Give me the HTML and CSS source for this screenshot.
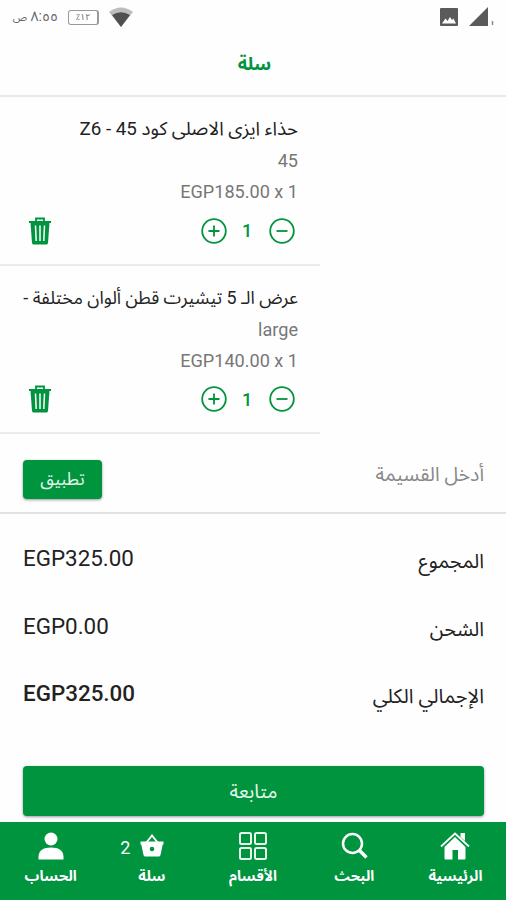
FILE: index.html
```html
<!DOCTYPE html>
<html lang="ar" dir="rtl">
<head>
  <meta charset="utf-8">
  <meta name="viewport" content="width=device-width, initial-scale=1">
  <title>سلة</title>
  <link rel="stylesheet" href="styles.css">
</head>
<body>

  <!-- Shared icons -->
  <svg class="icon-defs" width="0" height="0">
    <symbol id="trash" viewBox="0 0 24 28">
      <path d="M8 4.500V1.500h8v3" fill="none" stroke="currentColor" stroke-width="1.800"/>
      <path d="M1 4h22v2H1z" fill="currentColor"/>
      <path d="M2.500 5.500h19L20 26q-.2 1.500-1.700 1.500H5.700Q4.200 27.500 4 26z" fill="currentColor"/>
      <path d="M7.500 8.500l.7 15.500M12 8.500v15.500M16.500 8.500l-.7 15.500" fill="none" stroke="#fff" stroke-width="1.500"/>
    </symbol>
    <symbol id="plus" viewBox="0 0 26 26">
      <circle cx="13" cy="13" r="11.800" fill="none" stroke="currentColor" stroke-width="1.800"/>
      <path d="M7.500 13h11M13 7.500v11" stroke="currentColor" stroke-width="1.800"/>
    </symbol>
    <symbol id="minus" viewBox="0 0 26 26">
      <circle cx="13" cy="13" r="11.800" fill="none" stroke="currentColor" stroke-width="1.800"/>
      <path d="M7.500 13h11" stroke="currentColor" stroke-width="1.800"/>
    </symbol>
  </svg>

  <div class="status-bar">
    <div class="status-group right">
      <svg width="20" height="20" viewBox="0 0 20 20">
        <rect x="1" y="1" width="18" height="18" rx="1" fill="#5a5a5a"/>
        <path d="M3 16.500l3.500-5 2 2.500 2.500-4 2 3 1.500-1.500 2.500 5z" fill="#fff"/>
      </svg>
      <svg width="26" height="20" viewBox="0 0 26 20">
        <path d="M0 19L19 0v19z" fill="#5a5a5a"/>
        <path d="M23.500 14v4" stroke="#888" stroke-width="1.500"/>
      </svg>
    </div>
    <div class="status-group left">
      <span class="clock" dir="rtl">٨:٥٥ <small>ص</small></span>
      <span class="battery">٪١٢</span>
      <svg class="wifi" width="24" height="20" viewBox="0 0 24 20">
        <path d="M0 5Q12-4 24 5L12 20z" fill="#bdbdbd"/>
        <path d="M3 8Q12 2.500 21 8L12 20z" fill="#505050"/>
      </svg>
    </div>
  </div>

  <div class="header">سلة</div>

  <div class="cart-item">
    <div class="item-name">حذاء ايزى الاصلى كود Z6 - 45</div>
    <div class="item-info">45</div>
    <div class="item-info price">EGP185.00 x 1</div>
    <div class="item-actions">
      <svg class="round-icon"><use href="#minus"/></svg>
      <span class="quantity">1</span>
      <svg class="round-icon"><use href="#plus"/></svg>
      <svg class="trash-icon"><use href="#trash"/></svg>
    </div>
  </div>

  <div class="cart-item">
    <div class="item-name long">عرض الـ 5 تيشيرت قطن ألوان مختلفة -</div>
    <div class="item-info">large</div>
    <div class="item-info price">EGP140.00 x 1</div>
    <div class="item-actions">
      <svg class="round-icon"><use href="#minus"/></svg>
      <span class="quantity">1</span>
      <svg class="round-icon"><use href="#plus"/></svg>
      <svg class="trash-icon"><use href="#trash"/></svg>
    </div>
  </div>

  <div class="coupon">
    <span class="coupon-hint">أدخل القسيمة</span>
    <button class="apply">تطبيق</button>
  </div>

  <div class="totals">
    <div class="total-row"><span class="label">المجموع</span><span class="amount">EGP325.00</span></div>
    <div class="total-row"><span class="label">الشحن</span><span class="amount">EGP0.00</span></div>
    <div class="total-row grand"><span class="label">الإجمالي الكلي</span><span class="amount">EGP325.00</span></div>
  </div>

  <button class="continue">متابعة</button>

  <div class="tab-bar">
    <div class="tab">
      <svg width="30" height="28" viewBox="0 0 30 28" fill="#fff">
        <path d="M15 5L25.500 15v11.500q0 1-1 1H18V18h-5.500v9.500h-7q-1 0-1-1V15z"/>
        <path d="M20.500 1H25v8l-4.500-4z"/>
        <path d="M1 14.500L15 1.500l14 13" fill="none" stroke="#fff" stroke-width="1.800"/>
      </svg>
      <span>الرئيسية</span>
    </div>
    <div class="tab">
      <svg width="28" height="28" viewBox="0 0 28 28" fill="none" stroke="#fff">
        <circle cx="12.500" cy="11.500" r="9.500" stroke-width="2.500"/>
        <path d="M19 18l7.500 7.500" stroke-width="3.400"/>
      </svg>
      <span>البحث</span>
    </div>
    <div class="tab">
      <svg width="30" height="28" viewBox="0 0 30 28" fill="none" stroke="#e8f6ed" stroke-width="2">
        <rect x="2" y="1" width="11" height="11" rx="1.500"/>
        <rect x="17" y="1" width="11" height="11" rx="1.500"/>
        <rect x="2" y="16" width="11" height="11" rx="1.500"/>
        <rect x="17" y="16" width="11" height="11" rx="1.500"/>
      </svg>
      <span>الأقسام</span>
    </div>
    <div class="tab">
      <svg width="26" height="28" viewBox="0 0 26 28">
        <path d="M7 11l6-7.500 6 7.500" fill="none" stroke="#fff" stroke-width="2"/>
        <path d="M1.500 9.500h23v3h-.8L21.500 23q-.4 1.500-1.800 1.500H6.300q-1.400 0-1.800-1.500L2.300 12.500h-.8z" fill="#fff"/>
        <circle cx="13" cy="17" r="2.300" fill="#00943f"/>
      </svg>
      <i class="badge">2</i>
      <span>سلة</span>
    </div>
    <div class="tab">
      <svg width="26" height="28" viewBox="0 0 26 28" fill="#fff">
        <circle cx="13" cy="7" r="6.500"/>
        <path d="M.5 27.500v-3Q1 15.500 13 15.500t12.500 9v3z"/>
      </svg>
      <span>الحساب</span>
    </div>
  </div>

</body>
</html>
```
FILE: styles.css
```css
* {
  box-sizing: border-box;
}
body {
  margin: 0;
  height: 900px;
  overflow: hidden;
  display: flex;
  flex-direction: column;
  background: #fefefe;
  color: #222;
  font-family: Roboto, "Noto Sans Arabic", "DejaVu Sans", sans-serif;
}
svg {
  display: block;
  flex: none;
}
button {
  border: 0;
  border-radius: 4px;
  background: #00943f;
  color: #e4f5ea;
  font-family: inherit;
  box-shadow: 0 1px 3px rgba(0,0,0,0.4);
}
.icon-defs {
  position: absolute;
}

/* Status bar */
.status-bar {
  height: 34px;
  padding: 0 12px;
  display: flex;
  justify-content: space-between;
  align-items: center;
  color: #666;
}
.status-group {
  display: flex;
  align-items: center;
  gap: 10px;
  direction: ltr;
}
.status-group.right {
  margin-right: -1px;
}
.clock {
  font-size: 14px;
  line-height: 20px;
  width: 46px;
  white-space: nowrap;
}
.clock small {
  font-size: 11px;
}
.battery {
  width: 31px;
  height: 15px;
  border: 1px solid #999;
  border-right-width: 2px;
  border-radius: 3px;
  font-size: 9px;
  line-height: 12px;
  text-align: center;
}

.header {
  height: 63px;
  padding-left: 3px;
  border-bottom: 2px solid #e9e9e9;
  color: #00943f;
  font-size: 18px;
  font-weight: bold;
  line-height: 60px;
  text-align: center;
}

/* Cart items */
.cart-item {
  width: 320px;
  height: 168.500px;
  margin-right: auto;
  padding: 16px 22px 0;
  border-bottom: 2px solid #ebebeb;
}
.item-name {
  font-size: 18.800px;
  line-height: 32px;
  white-space: nowrap;
}
.item-name.long {
  font-size: 17.850px;
}
.item-info {
  font-size: 18.100px;
  line-height: 32px;
  height: 31px;
  color: #777;
}
.item-actions {
  height: 47px;
  display: flex;
  align-items: center;
  color: #00943f;
}
.round-icon {
  width: 26px;
  height: 26px;
  margin-right: 3px;
}
.quantity {
  width: 38px;
  margin-right: 3px;
  margin-left: -2px;
  font-size: 18px;
  font-weight: 500;
  text-align: center;
}
.trash-icon {
  width: 24px;
  height: 28px;
  margin-right: auto;
  margin-left: 6px;
}

/* Coupon */
.coupon {
  height: 80px;
  padding: 0 22px 0 23px;
  display: flex;
  justify-content: space-between;
  border-bottom: 2px solid #e2e2e2;
}
.coupon-hint {
  color: #888;
  font-size: 19.500px;
  line-height: 81px;
}
.apply {
  width: 79px;
  height: 39px;
  margin-top: 26px;
  font-size: 17.500px;
}

/* Totals */
.totals {
  height: 252px;
  padding: 11px 22px 0 23px;
}
.total-row {
  height: 67.500px;
  display: flex;
  justify-content: space-between;
  font-size: 22.400px;
  line-height: 67px;
}
.label {
  font-size: 20px;
  padding-top: 3px;
}
.grand .amount {
  font-weight: 500;
}

.continue {
  height: 50px;
  margin: 0 22px 0 23px;
  flex: none;
  font-size: 19.500px;
}

/* Bottom tabs */
.tab-bar {
  flex: 1;
  margin-top: 6px;
  display: grid;
  grid-template-columns: repeat(5, 1fr);
  background: #00943f;
  color: #fff;
}
.tab {
  position: relative;
  padding-top: 10px;
  display: flex;
  flex-direction: column;
  align-items: center;
  font-size: 14.600px;
  font-weight: bold;
  line-height: 32px;
}
.badge {
  position: absolute;
  top: 10px;
  left: 19px;
  font-size: 18px;
  font-style: normal;
  font-weight: normal;
}
```
